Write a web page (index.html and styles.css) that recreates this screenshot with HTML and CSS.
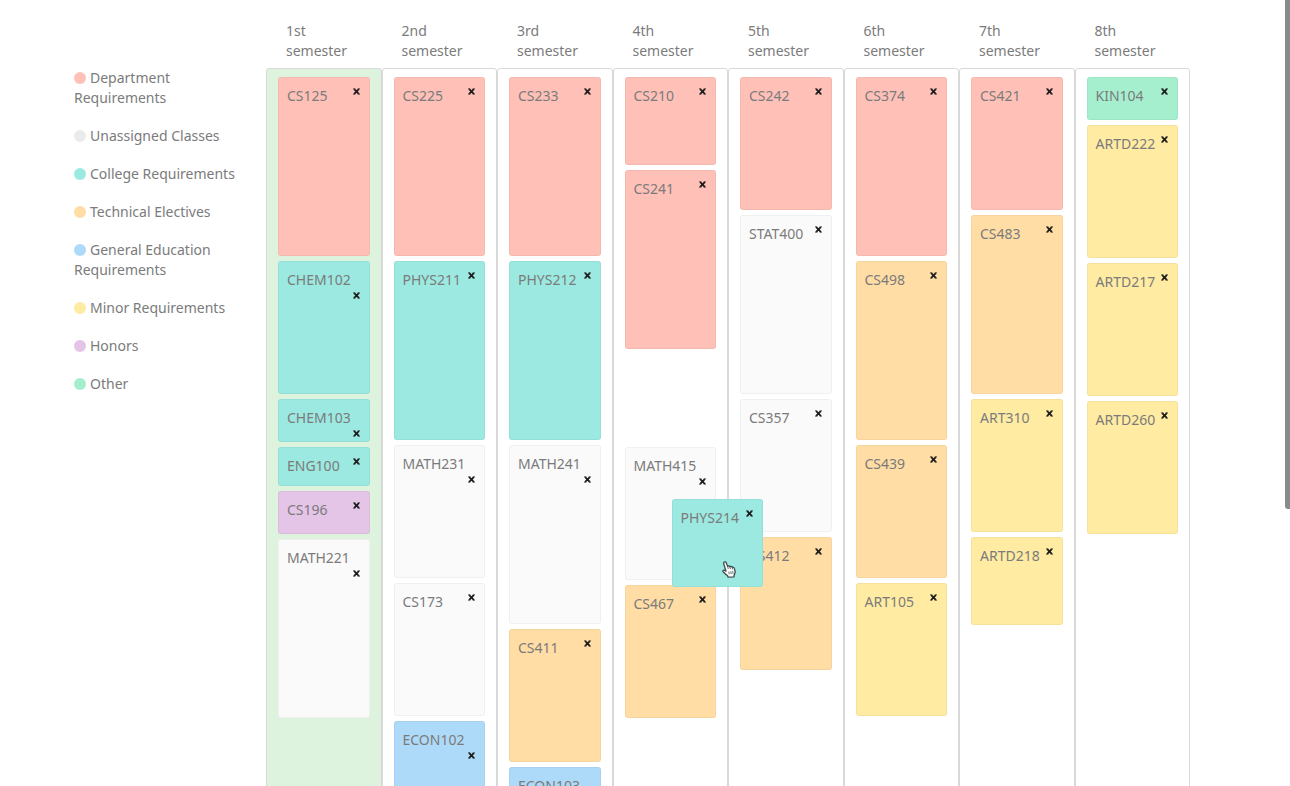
FILE: index.html
```html
<!DOCTYPE html>
<html lang="en">
<head>
<meta charset="utf-8">
<meta name="viewport" content="width=device-width, initial-scale=1">
<title>Course planner</title>
<link rel="stylesheet" href="styles.css">
</head>
<body>
<svg class="sprite" aria-hidden="true"><symbol id="x" viewBox="0 0 7 7"><path d="M1.2 1.2 5.8 5.8M5.8 1.2 1.2 5.8" stroke="currentColor" stroke-width="1.8"/><path d="M0 .9H2.3M4.7 .9H7M0 6.1H2.3M4.7 6.1H7" stroke="currentColor" stroke-width=".8"/></symbol></svg>
<main class="planner">
  <ul class="legend">
    <li><span class="dot department"></span>Department Requirements</li>
    <li><span class="dot unassigned"></span>Unassigned Classes</li>
    <li><span class="dot college"></span>College Requirements</li>
    <li><span class="dot technical"></span>Technical Electives</li>
    <li><span class="dot general"></span>General Education Requirements</li>
    <li><span class="dot minor"></span>Minor Requirements</li>
    <li><span class="dot honors"></span>Honors</li>
    <li><span class="dot other"></span>Other</li>
  </ul>
  <div class="board">
    <section class="semester current">
      <h2>1st semester</h2>
      <ul class="courses">
        <li class="card department h4"><span>CS125</span><button aria-label="Remove CS125"><svg><use href="#x"/></svg></button></li>
        <li class="card college h3"><span>CHEM102</span><button aria-label="Remove CHEM102"><svg><use href="#x"/></svg></button></li>
        <li class="card college h1"><span>CHEM103</span><button aria-label="Remove CHEM103"><svg><use href="#x"/></svg></button></li>
        <li class="card college h0"><span>ENG100</span><button aria-label="Remove ENG100"><svg><use href="#x"/></svg></button></li>
        <li class="card honors h1"><span>CS196</span><button aria-label="Remove CS196"><svg><use href="#x"/></svg></button></li>
        <li class="card unassigned h4"><span>MATH221</span><button aria-label="Remove MATH221"><svg><use href="#x"/></svg></button></li>
      </ul>
    </section>
    <section class="semester">
      <h2>2nd semester</h2>
      <ul class="courses">
        <li class="card department h4"><span>CS225</span><button aria-label="Remove CS225"><svg><use href="#x"/></svg></button></li>
        <li class="card college h4"><span>PHYS211</span><button aria-label="Remove PHYS211"><svg><use href="#x"/></svg></button></li>
        <li class="card unassigned h3"><span>MATH231</span><button aria-label="Remove MATH231"><svg><use href="#x"/></svg></button></li>
        <li class="card unassigned h3"><span>CS173</span><button aria-label="Remove CS173"><svg><use href="#x"/></svg></button></li>
        <li class="card general h3"><span>ECON102</span><button aria-label="Remove ECON102"><svg><use href="#x"/></svg></button></li>
      </ul>
    </section>
    <section class="semester">
      <h2>3rd semester</h2>
      <ul class="courses">
        <li class="card department h4"><span>CS233</span><button aria-label="Remove CS233"><svg><use href="#x"/></svg></button></li>
        <li class="card college h4"><span>PHYS212</span><button aria-label="Remove PHYS212"><svg><use href="#x"/></svg></button></li>
        <li class="card unassigned h4"><span>MATH241</span><button aria-label="Remove MATH241"><svg><use href="#x"/></svg></button></li>
        <li class="card technical h3"><span>CS411</span><button aria-label="Remove CS411"><svg><use href="#x"/></svg></button></li>
        <li class="card general h3"><span>ECON103</span><button aria-label="Remove ECON103"><svg><use href="#x"/></svg></button></li>
      </ul>
    </section>
    <section class="semester">
      <h2>4th semester</h2>
      <ul class="courses">
        <li class="card department h2"><span>CS210</span><button aria-label="Remove CS210"><svg><use href="#x"/></svg></button></li>
        <li class="card department h4"><span>CS241</span><button aria-label="Remove CS241"><svg><use href="#x"/></svg></button></li>
        <li class="slot h2">
          <div class="card college h2 dragging"><span>PHYS214</span><button aria-label="Remove PHYS214"><svg><use href="#x"/></svg></button>
            <svg class="pointer" viewBox="0 0 14 17" aria-hidden="true"><path d="M2.2 1.1C3 .5 4 .9 4.3 1.8L5.6 5.4C6.2 4.7 7.5 4.9 7.9 5.7 8.6 5.1 9.9 5.4 10.2 6.3 11.2 5.9 12.3 6.6 12.5 7.7L13.1 10.5C13.3 12 12.7 13 12.1 14.2L11.9 15.8 6.1 16.2 5.6 14.8C4.2 13.8 2.8 12.5 1.2 10.8.4 9.9 1.2 8.8 2.3 9.1L4 10.1 1.8 3C1.5 2.3 1.6 1.5 2.2 1.1Z" fill="#fff" stroke="#3d4c4b" stroke-width="1.3" stroke-linejoin="round"/><path d="M5.6 5.4 6.3 8M7.9 5.7 8.5 8.1M10.2 6.3 10.7 8.5M6.8 10.6 7.3 13.3M8.8 10.3 9.2 13.1M10.7 10.1 11 12.8" fill="none" stroke="#3d4c4b" stroke-width=".8"/></svg>
          </div>
        </li>
        <li class="card unassigned h3"><span>MATH415</span><button aria-label="Remove MATH415"><svg><use href="#x"/></svg></button></li>
        <li class="card technical h3"><span>CS467</span><button aria-label="Remove CS467"><svg><use href="#x"/></svg></button></li>
      </ul>
    </section>
    <section class="semester">
      <h2>5th semester</h2>
      <ul class="courses">
        <li class="card department h3"><span>CS242</span><button aria-label="Remove CS242"><svg><use href="#x"/></svg></button></li>
        <li class="card unassigned h4"><span>STAT400</span><button aria-label="Remove STAT400"><svg><use href="#x"/></svg></button></li>
        <li class="card unassigned h3"><span>CS357</span><button aria-label="Remove CS357"><svg><use href="#x"/></svg></button></li>
        <li class="card technical h3"><span>CS412</span><button aria-label="Remove CS412"><svg><use href="#x"/></svg></button></li>
      </ul>
    </section>
    <section class="semester">
      <h2>6th semester</h2>
      <ul class="courses">
        <li class="card department h4"><span>CS374</span><button aria-label="Remove CS374"><svg><use href="#x"/></svg></button></li>
        <li class="card technical h4"><span>CS498</span><button aria-label="Remove CS498"><svg><use href="#x"/></svg></button></li>
        <li class="card technical h3"><span>CS439</span><button aria-label="Remove CS439"><svg><use href="#x"/></svg></button></li>
        <li class="card minor h3"><span>ART105</span><button aria-label="Remove ART105"><svg><use href="#x"/></svg></button></li>
      </ul>
    </section>
    <section class="semester">
      <h2>7th semester</h2>
      <ul class="courses">
        <li class="card department h3"><span>CS421</span><button aria-label="Remove CS421"><svg><use href="#x"/></svg></button></li>
        <li class="card technical h4"><span>CS483</span><button aria-label="Remove CS483"><svg><use href="#x"/></svg></button></li>
        <li class="card minor h3"><span>ART310</span><button aria-label="Remove ART310"><svg><use href="#x"/></svg></button></li>
        <li class="card minor h2"><span>ARTD218</span><button aria-label="Remove ARTD218"><svg><use href="#x"/></svg></button></li>
      </ul>
    </section>
    <section class="semester">
      <h2>8th semester</h2>
      <ul class="courses">
        <li class="card other h1"><span>KIN104</span><button aria-label="Remove KIN104"><svg><use href="#x"/></svg></button></li>
        <li class="card minor h3"><span>ARTD222</span><button aria-label="Remove ARTD222"><svg><use href="#x"/></svg></button></li>
        <li class="card minor h3"><span>ARTD217</span><button aria-label="Remove ARTD217"><svg><use href="#x"/></svg></button></li>
        <li class="card minor h3"><span>ARTD260</span><button aria-label="Remove ARTD260"><svg><use href="#x"/></svg></button></li>
      </ul>
    </section>
  </div>
</main>
<div class="scroll-thumb"></div>
</body>
</html>
```
FILE: styles.css
```css
* {
  box-sizing: border-box;
}

body {
  margin: 0;
  height: 100vh;
  overflow: hidden;
  background: #fff;
  color: #7b7b7b;
  font: 14px/20px "Noto Sans", "Open Sans", sans-serif;
}

ul {
  margin: 0;
  padding: 0;
  list-style: none;
}

.sprite {
  display: none;
}

.planner {
  display: grid;
  grid-template-columns: 192px 1fr;
  padding: 21px 100px 0 74px;
}

/* Legend */
.legend {
  display: flex;
  flex-direction: column;
  gap: 18px;
  padding: 47px 20px 0 0;
}

.dot {
  display: inline-block;
  width: 12px;
  height: 12px;
  margin-right: 4px;
  border-radius: 50%;
  vertical-align: -1px;
}

.department { background: #ffc0b7; }
.unassigned { background: #fafafa; }
.college { background: #9be9e0; }
.technical { background: #ffdda5; }
.general { background: #aedaf9; }
.minor { background: #ffeba2; }
.honors { background: #e4c4e7; }
.other { background: #a5efcf; }
.dot.unassigned { background: #ebebeb; }

/* Board */
.board {
  display: grid;
  grid-template-columns: repeat(8, minmax(0, 1fr));
}

.semester {
  display: flex;
  flex-direction: column;
}

.semester h2 {
  margin: 0 0 7px;
  padding: 0 20px;
  font-size: 14px;
  font-weight: 400;
}

.courses {
  display: flex;
  flex: 1;
  flex-direction: column;
  gap: 5px;
  padding: 8px 11px;
  border: 1px solid #d9d9d9;
  border-radius: 3px;
}

.current .courses {
  background: #def3de;
}

.card {
  display: flex;
  flex-wrap: wrap;
  align-content: flex-start;
  align-items: flex-start;
  padding: 8px 9px 8px 8px;
  border: 1px solid rgba(0, 0, 0, 0.04);
  border-radius: 3px;
}

.card button {
  display: flex;
  justify-content: flex-end;
  align-items: center;
  width: 11px;
  height: 10px;
  margin-left: auto;
  padding: 0;
  border: 0;
  background: none;
  color: #1c1c1c;
}

.card button svg {
  width: 7px;
  height: 7px;
}

/* Card heights by credit hours */
.h0 { height: 39px; }
.h1 { height: 43px; }
.h2 { height: 88px; }
.h3 { height: 133px; }
.h4 { height: 179px; }

/* Card lifted out of its slot */
.slot {
  position: relative;
}

.dragging {
  position: absolute;
  top: 145px;
  left: 47px;
  z-index: 1;
  width: 100%;
}

.pointer {
  position: absolute;
  top: 61px;
  left: 49px;
  width: 14px;
  height: 17px;
}

.scroll-thumb {
  position: fixed;
  top: 0;
  right: 0;
  width: 5px;
  height: 509px;
  border-radius: 0 0 0 3px;
  background: #8a8a8a;
}
```
